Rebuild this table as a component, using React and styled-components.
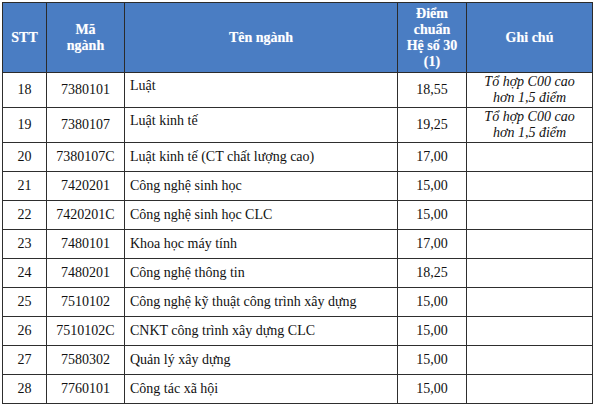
import React from 'react';
import styled, { createGlobalStyle } from 'styled-components';

const serif = `"Liberation Serif", "Times New Roman", Times, serif`;

const GlobalStyle = createGlobalStyle`
  html, body {
    margin: 0;
    padding: 0;
    background: #ffffff;
  }
  body, table, th, td {
    font-family: ${serif};
  }
`;

const Page = styled.div`
  width: 600px;
  height: 404px;
  padding: 2px 0 0 2px;
  box-sizing: border-box;
  overflow: hidden;
`;

const Table = styled.table`
  border-collapse: collapse;
  table-layout: fixed;
  width: 590px;
  color: #111;
  font-size: 14px;
`;

const HeadCell = styled.th`
  background: #4a7dc3;
  color: #ffffff;
  font-weight: bold;
  font-size: 14px;
  line-height: 16px;
  text-align: center;
  padding: 0;
  border: 1px solid #2b2b2b;
  height: 69px;
  text-shadow: 0 0 1px rgba(255, 255, 255, 0.4);
`;

const Row = styled.tr`
  height: ${(p) => (p.$tall ? '35px' : '29px')};
`;

const Cell = styled.td`
  border: 1px solid #2e2e2e;
  font-size: 14px;
  text-align: center;
  vertical-align: middle;
  padding: 0;
  line-height: 16px;
`;

const NameCell = styled(Cell)`
  text-align: left;
  vertical-align: ${(p) => (p.$tall ? 'top' : 'middle')};
  padding: ${(p) => (p.$tall ? '5px 0 0 5px' : '0 0 0 5px')};
`;

const NoteCell = styled(Cell)`
  font-style: italic;
`;

const rows = [
  ['18', '7380101', 'Luật', '18,55', true],
  ['19', '7380107', 'Luật kinh tế', '19,25', true],
  ['20', '7380107C', 'Luật kinh tế (CT chất lượng cao)', '17,00'],
  ['21', '7420201', 'Công nghệ sinh học', '15,00'],
  ['22', '7420201C', 'Công nghệ sinh học CLC', '15,00'],
  ['23', '7480101', 'Khoa học máy tính', '17,00'],
  ['24', '7480201', 'Công nghệ thông tin', '18,25'],
  ['25', '7510102', 'Công nghệ kỹ thuật công trình xây dựng', '15,00'],
  ['26', '7510102C', 'CNKT công trình xây dựng CLC', '15,00'],
  ['27', '7580302', 'Quản lý xây dựng', '15,00'],
  ['28', '7760101', 'Công tác xã hội', '15,00'],
];

export default function App() {
  return (
    <Page>
      <GlobalStyle />
      <Table>
        <colgroup>
          <col style={{ width: 44 }} />
          <col style={{ width: 78 }} />
          <col style={{ width: 273 }} />
          <col style={{ width: 69 }} />
          <col style={{ width: 126 }} />
        </colgroup>
        <thead>
          <tr>
            <HeadCell>STT</HeadCell>
            <HeadCell>
              Mã
              <br />
              ngành
            </HeadCell>
            <HeadCell>Tên ngành</HeadCell>
            <HeadCell>
              Điểm
              <br />
              chuẩn
              <br />
              Hệ số 30
              <br />
              (1)
            </HeadCell>
            <HeadCell>Ghi chú</HeadCell>
          </tr>
        </thead>
        <tbody>
          {rows.map(([stt, code, name, score, tall]) => (
            <Row key={stt} $tall={tall}>
              <Cell>{stt}</Cell>
              <Cell>{code}</Cell>
              <NameCell $tall={tall}>{name}</NameCell>
              <Cell>{score}</Cell>
              <NoteCell>
                {tall ? (
                  <>
                    Tổ hợp C00 cao
                    <br />
                    hơn 1,5 điểm
                  </>
                ) : null}
              </NoteCell>
            </Row>
          ))}
        </tbody>
      </Table>
    </Page>
  );
}
